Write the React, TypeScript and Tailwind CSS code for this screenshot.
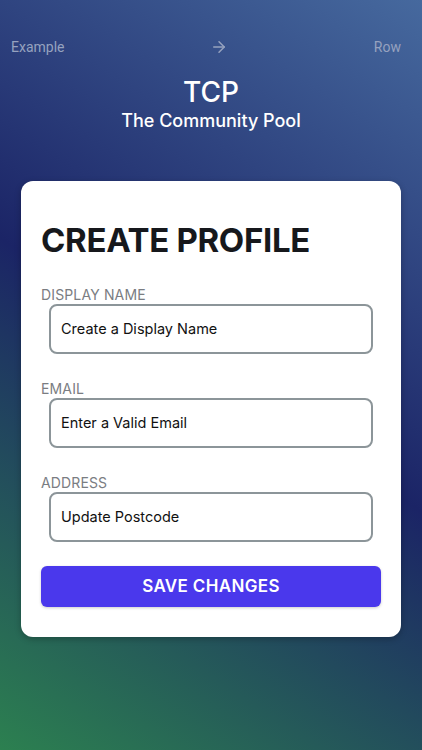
import { ArrowRight } from "lucide-react";

const FIELDS = [
  { label: "DISPLAY NAME", placeholder: "Create a Display Name" },
  { label: "EMAIL", placeholder: "Enter a Valid Email" },
  { label: "ADDRESS", placeholder: "Update Postcode" },
];

export default function App() {
  return (
    <div className="flex h-[750px] w-full flex-col bg-[linear-gradient(213deg,#46699e_0%,#1b2466_50%,#2c8050_100%)] font-['Inter',sans-serif]">
      {/* top row */}
      <div className="mt-[36px] flex h-[22px] items-center justify-between px-[11px] font-['Roboto',sans-serif] text-[14px] text-[#96a2bf]">
        <span>Example</span>
        <ArrowRight className="size-[18px]" strokeWidth={2} />
        <span className="mr-[10px]">Row</span>
      </div>

      <div className="mt-[17px] flex flex-col items-center text-white">
        <h1 className="text-[28px] font-medium leading-[34px]">TCP</h1>
        <p className="text-[18px] font-medium leading-[24px]">The Community Pool</p>
      </div>

      <div className="mx-[21px] mt-[48px] rounded-[12px] bg-white px-5 pb-[30px] pt-[40px] shadow-[0_2px_6px_rgba(0,0,0,0.25)]">
        <h2 className="text-[33px] font-bold leading-[38px] tracking-[-0.01em] text-[#16181c]">
          CREATE PROFILE
        </h2>

        <div className="mt-[27px] flex flex-col gap-[26px]">
          {FIELDS.map((f) => (
            <div key={f.label} className="flex flex-col">
              <span className="text-[14px] leading-[18px] tracking-[0.01em] text-[#7a7d82]">
                {f.label}
              </span>
              <div className="mx-2 flex h-[50px] items-center rounded-[8px] border-2 border-[#8c9599] px-[10px] text-[14.5px] text-[#111]">
                {f.placeholder}
              </div>
            </div>
          ))}
        </div>

        <button className="mt-[24px] flex h-[41px] w-full items-center justify-center rounded-[6px] bg-[#4a38ec] text-[17px] font-semibold tracking-[0.02em] text-white shadow-[0_1px_3px_rgba(0,0,0,0.2)]">
          SAVE CHANGES
        </button>
      </div>
    </div>
  );
}
